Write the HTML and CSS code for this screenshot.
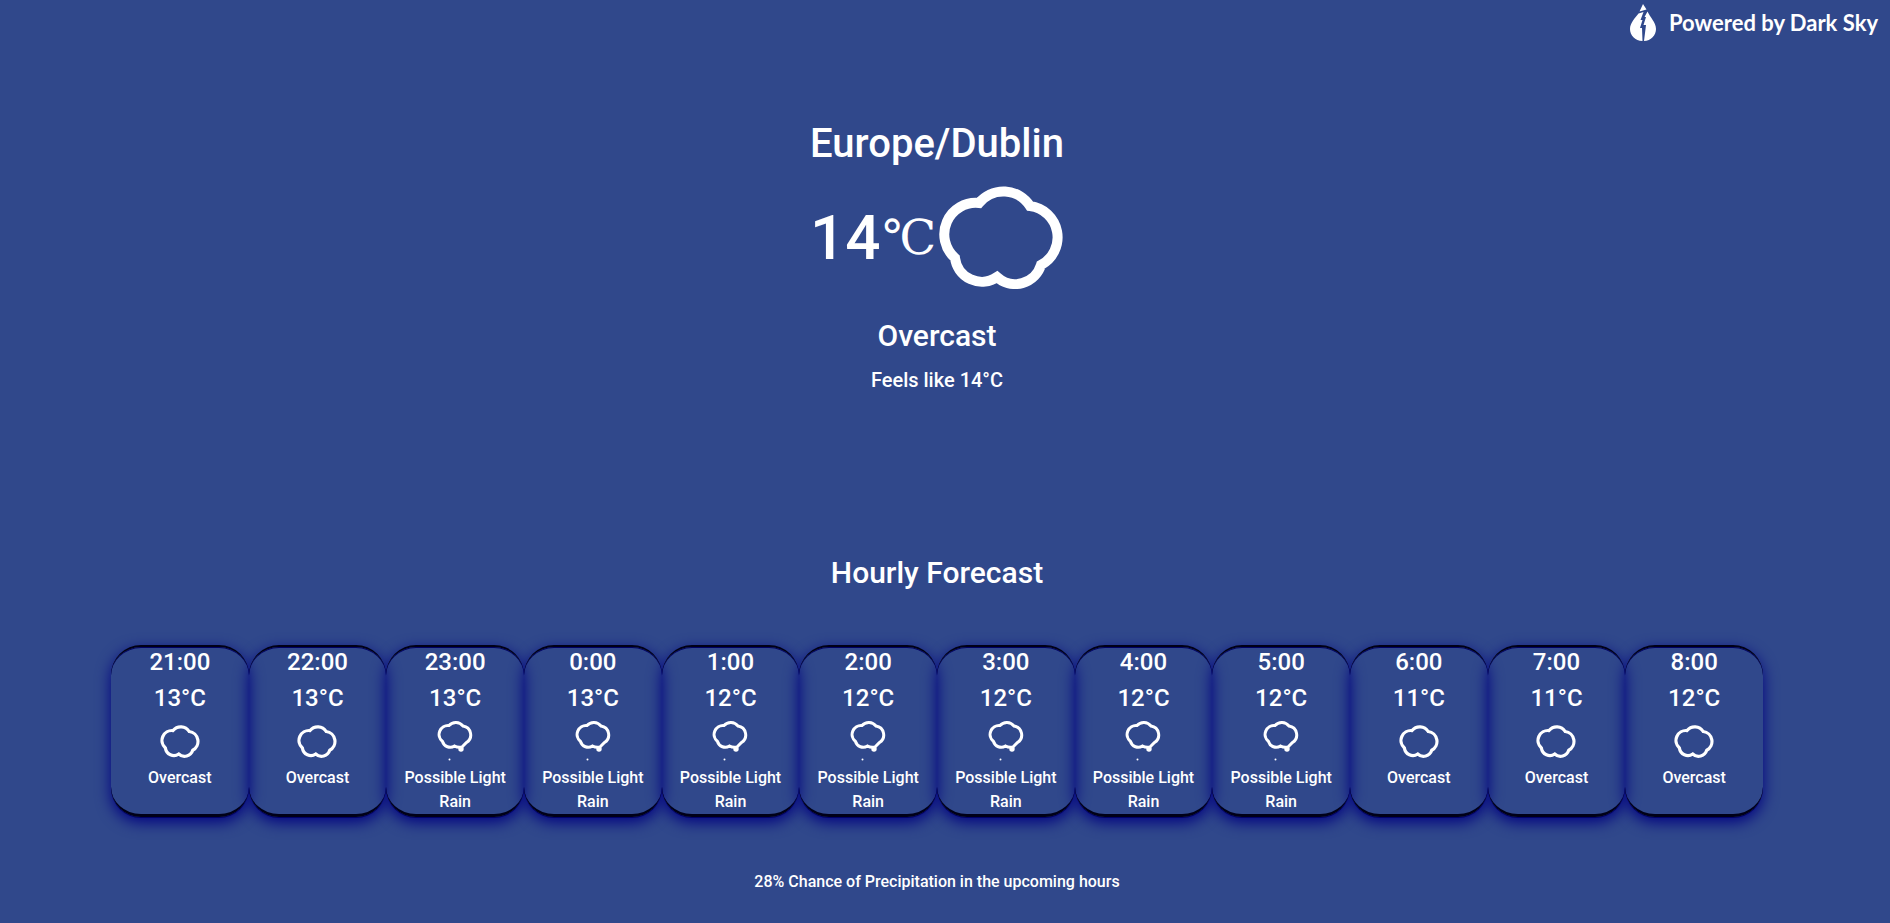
FILE: index.html
```html
<!DOCTYPE html>
<html lang="en">
<head>
<meta charset="utf-8">
<title>Weather</title>
<link rel="stylesheet" href="styles.css">
</head>
<body>
<svg class="defs" aria-hidden="true">
  <symbol id="cloud" viewBox="-1 -1 126 103">
    <path d="M16 71 A31.500 31.500 0 0 1 40 16 A31.500 31.500 0 0 1 91 19 A31.500 31.500 0 0 1 102 78 A27 27 0 0 1 58 90 A27 27 0 0 1 16 71 Z" fill="none" stroke="currentColor" stroke-width="10"/>
  </symbol>
  <symbol id="rain" viewBox="0 0 36 42">
    <path d="M5.500 21.500 A9 9 0 0 1 12 5.500 A9 9 0 0 1 26 6 A9 9 0 0 1 29.500 22.500 L25 27 Q21 28 17.500 26 A8 8 0 0 1 5.500 21.500 Z" fill="none" stroke="currentColor" stroke-width="3"/>
    <circle cx="24" cy="29" r="2.700" fill="currentColor"/>
    <circle cx="12.500" cy="39.500" r="1" fill="currentColor"/>
  </symbol>
</svg>
<header class="credit">
  <a class="credit-link" href="#">
    <svg class="drop" viewBox="0 0 28 38" aria-hidden="true">
      <path d="M14 0 L17.500 5.500 L10.500 7.500 Z" fill="#fff"/>
      <path d="M9.500 9.500 L14.500 8 L11.500 16 L13.500 16 L11 24 L13 24 L13.500 37 C6 37 1 31 1 25 C1 19 6 14 9.500 9.500 Z" fill="#fff"/>
      <path d="M18.500 7.500 C21 13 27 18.500 27 25 C27 31 22 37 15 37 L17 21 L14.500 21 L17 13 L15.500 13 Z" fill="#fff"/>
    </svg>
    <span>Powered by Dark Sky</span>
  </a>
</header>
<main class="page">
  <section class="current">
    <h1 class="place">Europe/Dublin</h1>
    <div class="reading">
      <span class="degrees">14</span>
      <span class="unit">℃</span>
      <svg class="big-cloud" role="img" aria-label="Overcast"><use href="#cloud"/></svg>
    </div>
    <p class="summary">Overcast</p>
    <p class="feels">Feels like 14°C</p>
  </section>
  <section class="hourly">
    <h2 class="heading">Hourly Forecast</h2>
    <div class="hours" id="hours"></div>
    <p class="chance">28% Chance of Precipitation in the upcoming hours</p>
  </section>
</main>
<script src="script.js"></script>
</body>
</html>
```
FILE: styles.css
```css
* { box-sizing: border-box; }
body {
  margin: 0;
  min-height: 100vh;
  background: #30488b;
  color: #fff;
  font-family: Roboto, "Noto Sans", sans-serif;
  font-weight: 500;
  display: flex;
  flex-direction: column;
}
h1, h2, p { margin: 0; font-weight: 500; }
.defs { display: none; }
.credit { display: flex; justify-content: flex-end; padding: 4px 12px 0 0; }
.credit-link {
  display: flex;
  align-items: center;
  gap: 12px;
  color: #fff;
  text-decoration: none;
  font-family: Lato, sans-serif;
  font-size: 22px;
  font-weight: 700;
  line-height: 38px;
}
.drop { width: 28px; height: 38px; }
.page { padding: 78px 16px 0 0; text-align: center; }
.place { font-size: 40px; line-height: 48px; }
.reading {
  display: flex;
  align-items: center;
  justify-content: center;
  gap: 2px;
  margin-top: 18px;
  height: 103px;
}
.degrees { font-size: 62px; line-height: 96px; }
.unit { font-family: "Liberation Serif", "DejaVu Serif", serif; font-weight: 400; font-size: 48px; line-height: 96px; }
.big-cloud { width: 126px; height: 103px; }
.summary { margin-top: 27px; font-size: 30px; line-height: 40px; }
.feels { margin-top: 10px; font-size: 20px; line-height: 28px; }
.heading { margin-top: 155px; font-size: 30px; line-height: 48px; }
.hours {
  display: grid;
  grid-template-columns: repeat(12, 1fr);
  margin-top: 48px;
  padding: 0 111px;
}
.hour {
  display: flex;
  flex-direction: column;
  align-items: center;
  min-height: 172px;
  border-top: 2px solid #000018;
  border-bottom: 3px solid #000018;
  border-radius: 30px;
  box-shadow: inset 0 1px 0 #000066, 0 1px 0 #000066, 0 5px 15px #000080;
}
.time, .temp { font-size: 24px; }
.time { line-height: 30px; }
.temp { line-height: 42px; }
.icon { height: 44px; display: flex; align-items: center; }
.icon-cloud { width: 40px; height: 33px; }
.icon-rain { width: 36px; height: 42px; }
.note { margin-top: 3px; font-size: 16px; line-height: 24px; padding: 0 16px; }
.chance { margin-top: 53px; font-size: 16px; line-height: 24px; }
```
FILE: script.js
```js
const forecast = [
  ["21:00", 13, "Overcast"], ["22:00", 13, "Overcast"],
  ["23:00", 13, "Possible Light Rain"], ["0:00", 13, "Possible Light Rain"],
  ["1:00", 12, "Possible Light Rain"], ["2:00", 12, "Possible Light Rain"],
  ["3:00", 12, "Possible Light Rain"], ["4:00", 12, "Possible Light Rain"],
  ["5:00", 12, "Possible Light Rain"], ["6:00", 11, "Overcast"],
  ["7:00", 11, "Overcast"], ["8:00", 12, "Overcast"]
];
document.getElementById("hours").innerHTML = forecast.map(([time, temp, note]) => {
  const kind = note === "Overcast" ? "cloud" : "rain";
  return `<article class="hour">
    <div class="time">${time}</div>
    <div class="temp">${temp}°C</div>
    <div class="icon"><svg class="icon-${kind}" aria-hidden="true"><use href="#${kind}"/></svg></div>
    <div class="note">${note}</div>
  </article>`;
}).join("");
```
